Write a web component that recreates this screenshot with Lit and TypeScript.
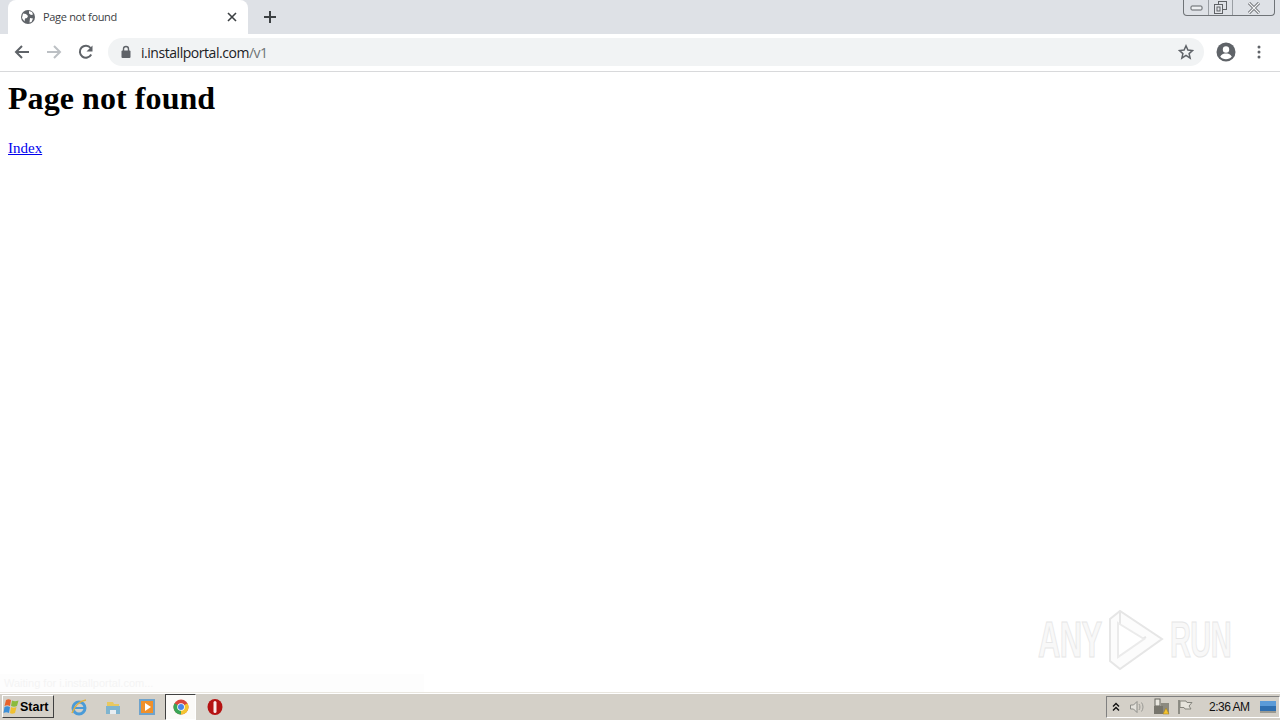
import { LitElement, html, css, svg } from "lit";
import { customElement } from "lit/decorators.js";

@customElement("app-root")
export class AppRoot extends LitElement {
  static styles = css`
    :host { display: flex; flex-direction: column; width: 1280px; height: 720px; position: relative; overflow: hidden; background: #fff; font-family: "Liberation Serif", serif; }
    svg { display: block; flex: none; }
    .strip { height: 34px; background: #dee1e6; display: flex; align-items: flex-end; padding-left: 8px; position: relative; flex: none; }
    .tab { width: 240px; height: 34px; background: #fff; border-radius: 8px 8px 0 0; display: flex; align-items: center; box-sizing: border-box; padding: 0 11px 1px 12px; }
    .tab-title { font: 11px "Open Sans", "Noto Sans", sans-serif; color: #3c4043; margin-left: 7px; flex: 1; letter-spacing: -0.32px; }
    .newtab { margin-left: 16px; margin-bottom: 11px; }
    .winbtns { position: absolute; right: 5px; top: 0; height: 16px; width: 92px; box-sizing: border-box; border: 1px solid #6f7377; border-top: 0; border-radius: 0 0 4px 4px; display: flex; background: #dee1e6; }
    .winbtns > div { display: flex; align-items: center; justify-content: center; }
    .min { width: 24px; border-right: 1px solid #9a9ea3; }
    .max { width: 24px; border-right: 1px solid #9a9ea3; padding-right: 1px; box-sizing: border-box; }
    .cls { flex: 1; }
    .toolbar { height: 36px; padding-bottom: 1px; flex: none; background: #fff; border-bottom: 1px solid #d8d9db; display: flex; align-items: center; padding-left: 14px; box-sizing: content-box; }
    .nav { display: flex; gap: 16px; align-items: center; }
    .omni { margin-left: 14px; width: 1096px; height: 28px; background: #f1f3f4; border-radius: 14px; display: flex; align-items: center; box-sizing: border-box; padding: 0 10px 0 12px; }
    .url { font: 14px "Open Sans", "Noto Sans", sans-serif; color: #202124; margin-left: 9px; flex: 1; letter-spacing: -0.46px; }
    .url span { color: #6f7377; }
    .tb-right { display: flex; align-items: center; margin-left: 12px; gap: 21px; }
    .content { flex: 1; padding: 8px; min-height: 0; }
    h1 { font-size: 32px; font-weight: bold; margin: 0; line-height: 37px; color: #000; letter-spacing: 0.07px; }
    p { margin: 22px 0 0; font-size: 15px; line-height: 18px; }
    a { color: #0000ee; text-decoration: underline; }
    .taskbar { height: 28px; flex: none; background: #d4d0c8; border-top: 1px solid #e9e6df; box-shadow: inset 0 1px 0 #fff; display: flex; align-items: center; box-sizing: border-box; position: relative; }
    .start { margin-left: 2px; width: 52px; height: 23px; box-sizing: border-box; border: 1px solid; border-color: #fff #404040 #404040 #fff; display: flex; align-items: center; font: bold 12.5px "Liberation Sans", sans-serif; color: #000; }
    .quick { display: flex; align-items: center; margin-left: 16px; gap: 16px; }
    .chrome-btn { width: 31px; height: 26px; margin: 0 -5px 0 -7px; box-sizing: border-box; background: #fbfaf8; border: 1px solid; border-color: #404040 #fff #fff #404040; display: flex; align-items: center; justify-content: center; }
    .tray { margin-left: auto; width: 174px; height: 22px; box-sizing: border-box; border: 1px solid; border-color: #808080 #fff #fff #808080; display: flex; align-items: center; padding-left: 3px; }
    .tray .chev { margin-left: 1px; }
    .tray .spk { margin-left: 8px; }
    .tray .net { margin-left: 8px; }
    .tray .flag { margin-left: 7px; }
    .tray .clock { font: 12px "Liberation Sans", sans-serif; color: #111; margin-left: 16px; white-space: nowrap; letter-spacing: -0.5px; }
    .tray .desk { margin-left: 10px; }
    .status { position: absolute; left: 0; top: 674px; width: 424px; height: 18px; background: #fdfdfd; font: 11px "Liberation Sans", sans-serif; color: #f4f4f4; padding-left: 4px; box-sizing: border-box; line-height: 18px; }
    .wm { position: absolute; left: 1038px; top: 609px; display: flex; align-items: center; pointer-events: none; font: bold 50px "Liberation Sans", sans-serif; }
    .wm span { display: block; width: 68px; letter-spacing: -1px; line-height: 62px; transform-origin: left center; color: #f8f8f8; -webkit-text-stroke: 1px #e6e6e6; }
    .wm .any { transform: scaleX(0.62); }
    .wm .run { transform: scaleX(0.58); width: 60px; margin-left: 6px; }
  `;

  private globe() {
    return html`<svg width="16" height="16" viewBox="0 0 16 16"><circle cx="8" cy="8" r="7" fill="#5f6368"/><path d="M3 4.500l3 .5 2 2-1 2-2 .5-.5 3L2 9zM9 2l3 1 1 2.500-2 .5-2-1.500zM10 9l3 .5-1.500 3.500-2 .5z" fill="#fff"/></svg>`;
  }

  render() {
    return html`
      <div class="strip">
        <div class="tab">
          ${this.globe()}
          <div class="tab-title">Page not found</div>
          <svg width="10" height="10" viewBox="0 0 10 10"><path d="M1 1l8 8M9 1l-8 8" stroke="#3c4043" stroke-width="1.600"/></svg>
        </div>
        <svg class="newtab" width="12" height="12" viewBox="0 0 12 12"><path d="M6 0v12M0 6h12" stroke="#3c4043" stroke-width="2"/></svg>
        <div class="winbtns">
          <div class="min"><svg width="13" height="6" viewBox="0 0 13 6"><rect x="1" y="1" width="11" height="4" rx="1" fill="#eef0f2" stroke="#5f6266"/></svg></div>
          <div class="max"><svg width="13" height="13" viewBox="0 0 13 13"><rect x="4.500" y="0.500" width="8" height="8" fill="none" stroke="#5f6266"/><rect x="0.500" y="3.500" width="8" height="9" fill="#e4e6ea" stroke="#5f6266"/><rect x="3" y="6" width="3" height="4" fill="none" stroke="#5f6266"/></svg></div>
          <div class="cls"><svg width="14" height="12" viewBox="0 0 14 12"><path d="M2 1l10 10M12 1L2 11" stroke="#66696d" stroke-width="3"/><path d="M2 1l10 10M12 1L2 11" stroke="#f4f5f6" stroke-width="1.200"/></svg></div>
        </div>
      </div>
      <div class="toolbar">
        <div class="nav">
          <svg width="16" height="16" viewBox="0 0 16 16"><path d="M15 8H2M8 2L2 8l6 6" fill="none" stroke="#5f6368" stroke-width="2"/></svg>
          <svg width="16" height="16" viewBox="0 0 16 16"><path d="M1 8h13M8 2l6 6-6 6" fill="none" stroke="#bcc0c4" stroke-width="2"/></svg>
          <svg width="16" height="16" viewBox="0 0 16 16"><path d="M13.200 10.500A6 6 0 1 1 12.600 4" fill="none" stroke="#5f6368" stroke-width="2"/><path d="M14.500 1.500v6h-6z" fill="#5f6368"/></svg>
        </div>
        <div class="omni">
          <svg width="12" height="14" viewBox="0 0 12 14"><rect x="1.500" y="5.500" width="9" height="7.500" rx="1" fill="#5f6368"/><path d="M3.500 6V4a2.500 2.500 0 0 1 5 0v2" fill="none" stroke="#5f6368" stroke-width="1.400"/></svg>
          <div class="url">i.installportal.com<span>/v1</span></div>
          <svg width="16" height="16" viewBox="0 0 16 16"><path d="M8 1.800l1.900 4.200 4.600.5-3.400 3.100 1 4.500L8 11.300l-4.100 2.800 1-4.500L1.500 6.500l4.600-.5z" fill="none" stroke="#5f6368" stroke-width="1.500"/></svg>
        </div>
        <div class="tb-right">
          <svg width="20" height="20" viewBox="0 0 20 20"><circle cx="10" cy="10" r="9.500" fill="#5f6368"/><circle cx="10" cy="7.500" r="3.200" fill="#fff"/><path d="M4.200 14.500c1.500-2.500 3.800-3 5.800-3s4.300.5 5.800 3c-1.300 1.700-3.400 2.800-5.800 2.800s-4.500-1.100-5.800-2.800z" fill="#fff"/></svg>
          <svg width="4" height="14" viewBox="0 0 4 14"><circle cx="2" cy="2" r="1.500" fill="#5f6368"/><circle cx="2" cy="7" r="1.500" fill="#5f6368"/><circle cx="2" cy="12" r="1.500" fill="#5f6368"/></svg>
        </div>
      </div>
      <div class="content">
        <h1>Page not found</h1>
        <p><a href="#">Index</a></p>
      </div>
      <div class="taskbar">
        <div class="start">
          <svg width="17" height="17" viewBox="0 0 17 17"><path d="M3 2c2-1 3-1 5 0L7 8C5 7 3.500 7 1.500 8z" fill="#e8632c"/><path d="M9 2.500c2 1 4 1 6.500 0L14 8c-2 1-4 1-6 0z" fill="#8bbb3c"/><path d="M1.500 9c2-1 3.500-1 5.500 0L6 15c-2-1-3.500-1-5.500 0z" fill="#3c8fd8"/><path d="M8 9c1.500 1 3.500 1 5.500 0L12 15c-2 1-4 1-5 0z" fill="#f0c030"/></svg>
          <span>Start</span>
        </div>
        <div class="quick">
          <svg width="18" height="18" viewBox="0 0 18 18"><circle cx="9" cy="10" r="6" fill="none" stroke="#4a9bd8" stroke-width="3"/><path d="M4 10h10" stroke="#4a9bd8" stroke-width="2"/><path d="M2 15c3-8 8-12 14-13" fill="none" stroke="#e0b040" stroke-width="1.500"/></svg>
          <svg width="18" height="18" viewBox="0 0 18 18"><path d="M3 4h6l1 2h5v3H3z" fill="#e8c860"/><path d="M2 8h14v8H2z" fill="#7fb4cf"/><path d="M6 16v-4h6v4z" fill="#e8eef2"/></svg>
          <svg width="18" height="18" viewBox="0 0 18 18"><rect x="1" y="1" width="16" height="16" fill="#6fa3cc"/><rect x="3" y="3" width="12" height="12" fill="#f0902a"/><path d="M7 5l6 4-6 4z" fill="#fff"/></svg>
          <div class="chrome-btn">
            <svg width="16" height="16" viewBox="0 0 16 16"><circle cx="8" cy="8" r="7.500" fill="#d9463c"/><path d="M8 8L1.500 4.200A7.500 7.500 0 0 0 8 15.500z" fill="#3aa556"/><path d="M8 8l6.500-3.800A7.500 7.500 0 0 1 8 15.500z" fill="#f4c430"/><circle cx="8" cy="8" r="3.800" fill="#fff"/><circle cx="8" cy="8" r="3" fill="#4a86e8"/></svg>
          </div>
          <svg width="16" height="18" viewBox="0 0 16 18"><ellipse cx="8" cy="9" rx="7.500" ry="8" fill="#b51212"/><rect x="6.500" y="3" width="3" height="12" rx="1.500" fill="#fbeaea"/></svg>
        </div>
        <div class="tray">
          <svg class="chev" width="10" height="10" viewBox="0 0 10 10"><path d="M2 4.500l3-3 3 3M2 8.500l3-3 3 3" fill="none" stroke="#111" stroke-width="1.400"/></svg>
          <svg class="spk" width="16" height="16" viewBox="0 0 16 16"><path d="M1.500 6h3l3.500-3.500v11L4.500 10h-3z" fill="#e4e2dc" stroke="#8d8d88"/><path d="M10 5c1.200 1.800 1.200 4.200 0 6M12.500 3.500c2 2.700 2 6.300 0 9" fill="none" stroke="#9a9a95"/></svg>
          <svg class="net" width="17" height="17" viewBox="0 0 17 17"><rect x="2" y="1" width="5" height="7" fill="#e9e7df" stroke="#66665f"/><rect x="8" y="5" width="8" height="11" fill="#8c8a80"/><rect x="1" y="8" width="9" height="8" fill="#77756c"/><path d="M10 16l3-6 3 6z" fill="#f4c430" stroke="#a07a10" stroke-width=".5"/></svg>
          <svg class="flag" width="16" height="16" viewBox="0 0 16 16"><path d="M2 1v14" stroke="#77776f" stroke-width="1.500"/><path d="M3 2h6l1 1.500h5L12 7l2 3H8L7 8.500H3z" fill="#e6e4dc" stroke="#85857d"/></svg>
          <span class="clock">2:36 AM</span>
          <svg class="desk" width="16" height="14" viewBox="0 0 16 14"><rect x="0" y="1" width="16" height="11" fill="#2f6fb0"/><rect x="0" y="1" width="16" height="5" fill="#5b9bd8"/><rect x="0" y="11" width="16" height="2" fill="#9a9a92"/></svg>
        </div>
      </div>
      <div class="status">Waiting for i.installportal.com...</div>
      <div class="wm">
        <span class="any">ANY</span>
        <svg width="58" height="62" viewBox="0 0 58 62">${svg`<path d="M4 10L14 2l42 28-42 30-10-8z" fill="#fcfcfc" stroke="#e6e6e6" stroke-width="2"/><path d="M14 2v40l26-14" fill="none" stroke="#e6e6e6" stroke-width="2"/><path d="M12 14l26 16-26 18z" fill="#fff" stroke="#ebebeb" stroke-width="2"/>`}</svg>
        <span class="run">RUN</span>
      </div>
    `;
  }
}
